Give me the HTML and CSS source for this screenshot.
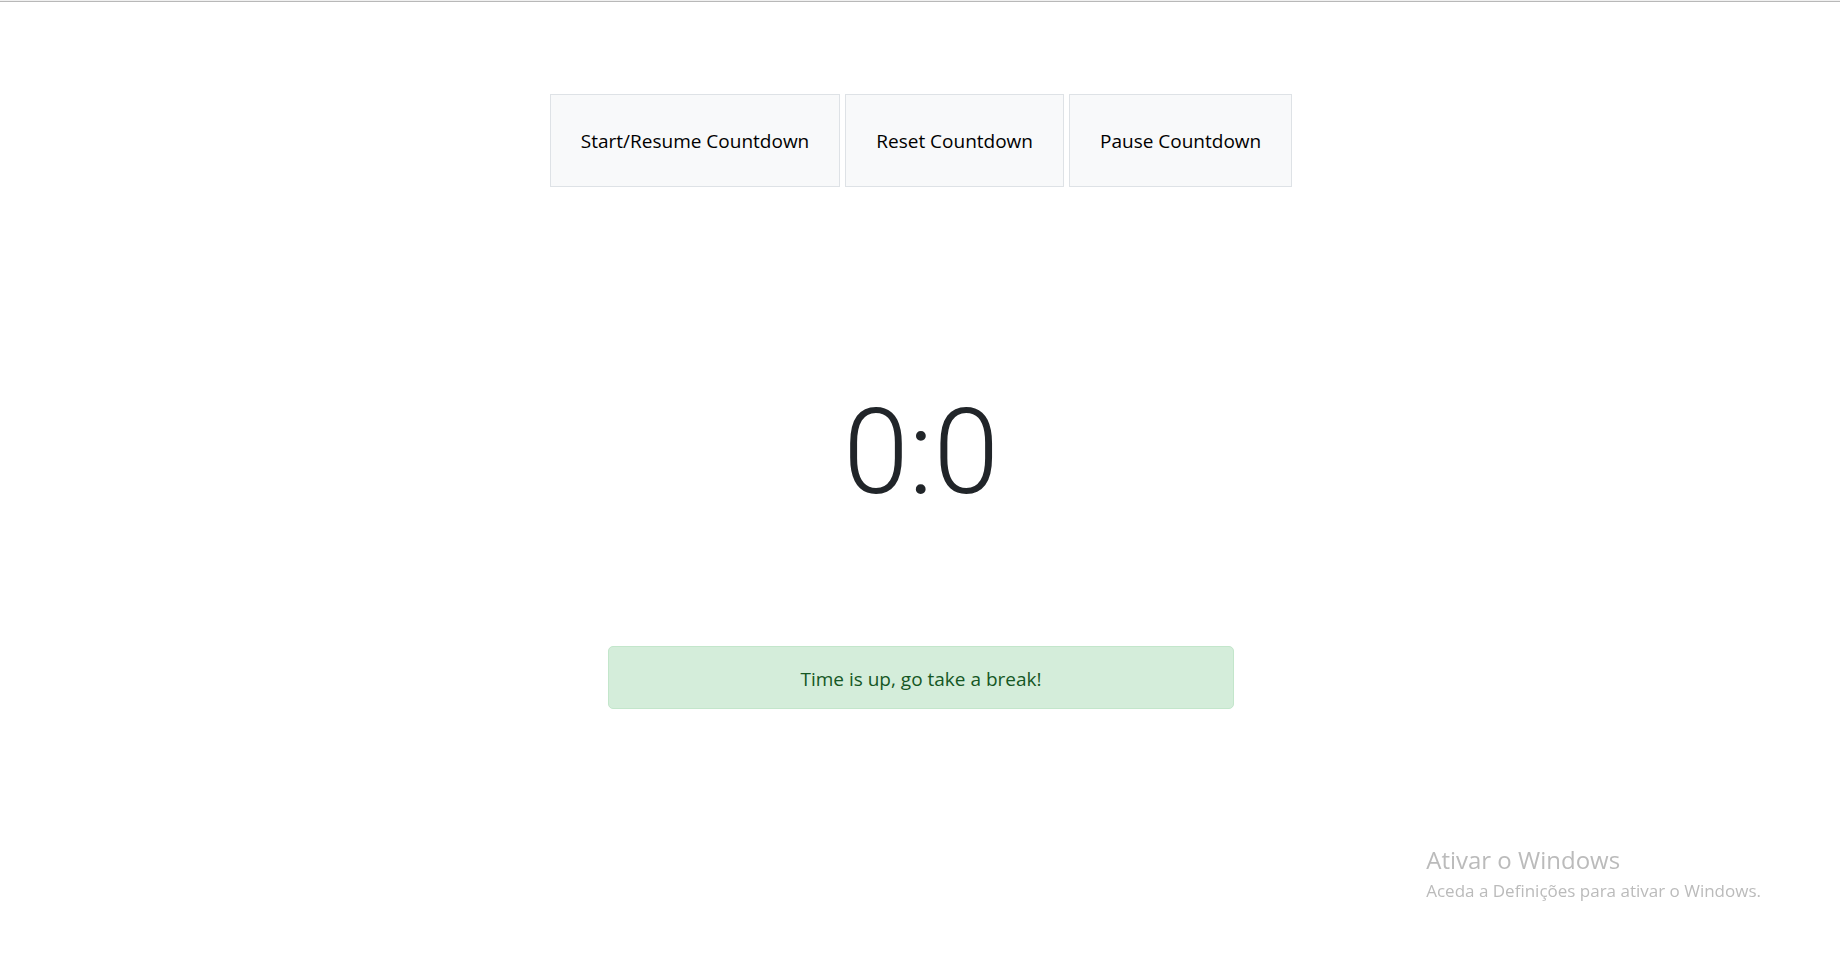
FILE: index.html
```html
<!DOCTYPE html>
<html lang="en">
<head>
<meta charset="utf-8">
<title>Countdown</title>
<link rel="stylesheet" href="styles.css">
</head>
<body>
<main class="timer">
  <div class="controls">
    <button class="control" type="button">Start/Resume Countdown</button>
    <button class="control" type="button">Reset Countdown</button>
    <button class="control" type="button">Pause Countdown</button>
  </div>
  <h1 class="clock">0:0</h1>
  <p class="alert" role="alert">Time is up, go take a break!</p>
</main>
<aside class="watermark">
  <p class="watermark-title">Ativar o Windows</p>
  <p class="watermark-text">Aceda a Definições para ativar o Windows.</p>
</aside>
</body>
</html>
```

FILE: styles.css
```css
* {
  box-sizing: border-box;
}

body {
  margin: 0;
  background: #fff;
  color: #212529;
  font-family: "Open Sans", "Noto Sans", sans-serif;
  font-size: 19px;
  line-height: 31px;
}

body::before {
  content: "";
  display: block;
  margin-right: 2px;
  border-top: 1px solid #f0f0f0;
  border-bottom: 1px solid #b8b8b8;
}

.timer {
  display: flex;
  flex-direction: column;
  align-items: center;
  padding-top: 92px;
}

.controls {
  display: flex;
  gap: 5px;
}

.control {
  padding: 31px 30px 29px;
  border: 1px solid #dee2e6;
  background: #f8f9fa;
  color: #000;
  font: inherit;
}

.clock {
  margin: 191px 0 118px;
  font-family: Roboto, "Open Sans", sans-serif;
  font-size: 118px;
  font-weight: 300;
  line-height: 150px;
}

.alert {
  width: 34%;
  margin: 0;
  padding: 17px 20px 13px;
  border: 1px solid #c3e6cb;
  border-radius: 5px;
  background: #d4edda;
  color: #155724;
  text-align: center;
}

.watermark {
  position: fixed;
  right: 81px;
  bottom: 48px;
  color: #bbb;
}

.watermark-title,
.watermark-text {
  margin: 0;
}

.watermark-title {
  font-size: 24px;
  line-height: 30px;
}

.watermark-text {
  font-size: 17px;
}
```
